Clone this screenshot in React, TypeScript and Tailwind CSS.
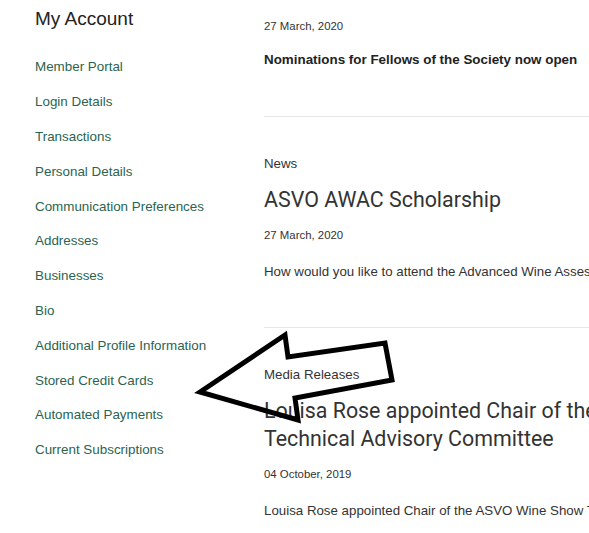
import React from 'react';

const links = [
  'Member Portal',
  'Login Details',
  'Transactions',
  'Personal Details',
  'Communication Preferences',
  'Addresses',
  'Businesses',
  'Bio',
  'Additional Profile Information',
  'Stored Credit Cards',
  'Automated Payments',
  'Current Subscriptions',
];

type Article = {
  category: string;
  title: React.ReactNode;
  date: string;
  summary: string;
};

const articles: Article[] = [
  {
    category: 'News',
    title: 'ASVO AWAC Scholarship',
    date: '27 March, 2020',
    summary: 'How would you like to attend the Advanced Wine Assessment Course in 2020?',
  },
  {
    category: 'Media Releases',
    title: (
      <>
        Louisa Rose appointed Chair of the ASVO Wine Show
        <br />
        Technical Advisory Committee
      </>
    ),
    date: '04 October, 2019',
    summary: 'Louisa Rose appointed Chair of the ASVO Wine Show Technical Advisory Committee',
  },
];

function Sidebar() {
  return (
    <aside className="w-[264px] shrink-0 pl-[35px] font-['Liberation_Sans',Arial,sans-serif]">
      <h2 className="mt-[7px] text-[19px] leading-6 text-[#222]">My Account</h2>
      <ul className="mt-[19px]">
        {links.map((label) => (
          <li key={label} className="flex h-[34.8px] items-center">
            <a href="#" className="whitespace-nowrap text-[13.4px] leading-5 text-[#2a6450]">
              {label}
            </a>
          </li>
        ))}
      </ul>
    </aside>
  );
}

function ArticleItem({ article }: { article: Article }) {
  return (
    <div className="border-b border-[#e6e6e6] pt-[37px] pb-[45px]">
      <div className="text-[13.3px] leading-5 text-[#333]">{article.category}</div>
      <h3 className="mt-[12px] whitespace-nowrap font-['Roboto',sans-serif] text-[21.4px] leading-[28px] text-[#333]">
        {article.title}
      </h3>
      <div className="mt-[13px] text-[11.4px] leading-4 text-[#333]">{article.date}</div>
      <p className="mt-[19px] whitespace-nowrap text-[13.3px] leading-5 text-[#333]">{article.summary}</p>
    </div>
  );
}

function Arrow() {
  return (
    <svg
      className="pointer-events-none absolute left-0 top-0"
      width="589"
      height="533"
      viewBox="0 0 589 533"
    >
      <polygon
        points="200,392 285,335 288,357 385,343 392,380 295,398 298,420"
        fill="none"
        stroke="#000"
        strokeWidth="5"
        strokeLinejoin="miter"
      />
    </svg>
  );
}

export default function App() {
  return (
    <div className="relative h-[533px] w-[589px] overflow-hidden bg-white">
      <div className="flex">
        <Sidebar />
        <main className="w-[420px] shrink-0 font-['Liberation_Sans',Arial,sans-serif]">
          <div className="border-b border-[#e6e6e6] pb-[46px]">
            <div className="mt-[18px] text-[11.4px] leading-4 text-[#333]">27 March, 2020</div>
            <p className="mt-[16px] whitespace-nowrap text-[13.4px] font-bold leading-5 text-[#222]">
              Nominations for Fellows of the Society now open
            </p>
          </div>
          {articles.map((a, i) => (
            <ArticleItem key={i} article={a} />
          ))}
        </main>
      </div>
      <Arrow />
    </div>
  );
}
